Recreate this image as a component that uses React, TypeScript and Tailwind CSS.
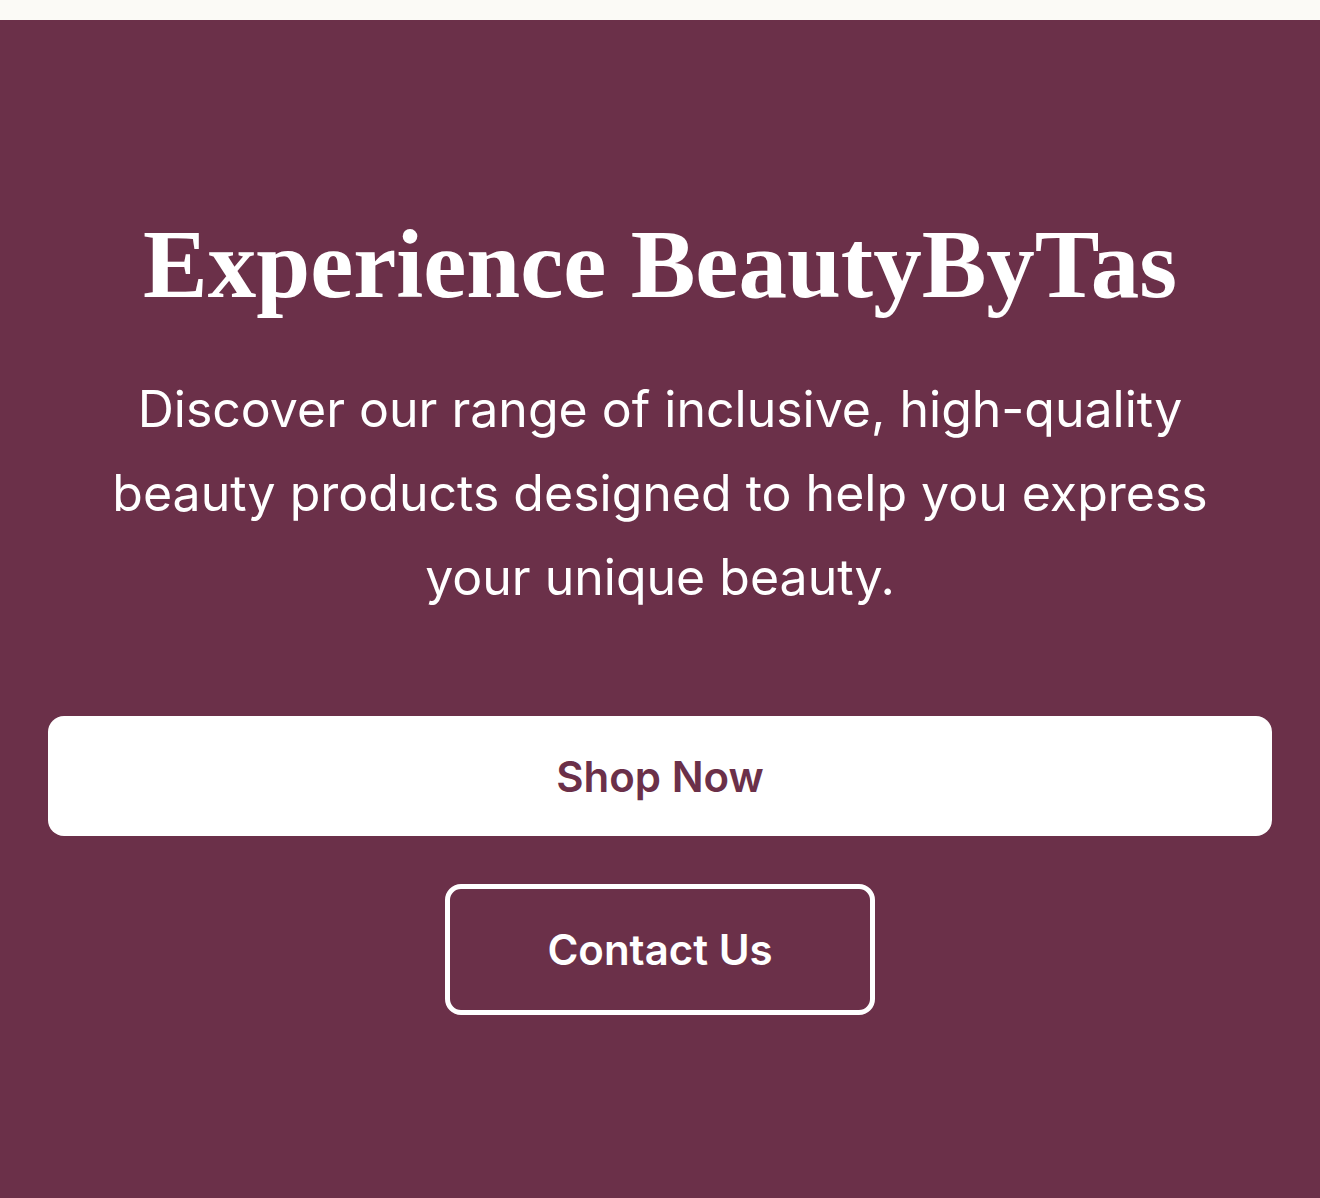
export default function App() {
  return (
    <div className="min-h-[1198px] w-full bg-[#fbfaf6] pt-[20px]">
      <section className="flex min-h-[1178px] flex-col items-center bg-[#6b3049] px-12 pt-[190px] text-center">
        <h1 className="font-['Liberation_Serif',serif] text-[97px] font-bold leading-[110px] text-white">
          Experience BeautyByTas
        </h1>
        <p className="mt-[47px] max-w-[1130px] font-['Inter',sans-serif] text-[50px] leading-[84px] text-white">
          Discover our range of inclusive, high-quality beauty products designed to help you express your unique beauty.
        </p>
        <div className="mt-[97px] flex w-full flex-col items-center gap-[48px]">
          <button className="h-[120px] w-full rounded-[16px] bg-white font-['Inter',sans-serif] text-[42px] font-semibold text-[#6b3049]">
            Shop Now
          </button>
          <button className="h-[131px] w-[430px] rounded-[16px] border-[5px] border-white font-['Inter',sans-serif] text-[42px] font-semibold text-white">
            Contact Us
          </button>
        </div>
      </section>
    </div>
  );
}
